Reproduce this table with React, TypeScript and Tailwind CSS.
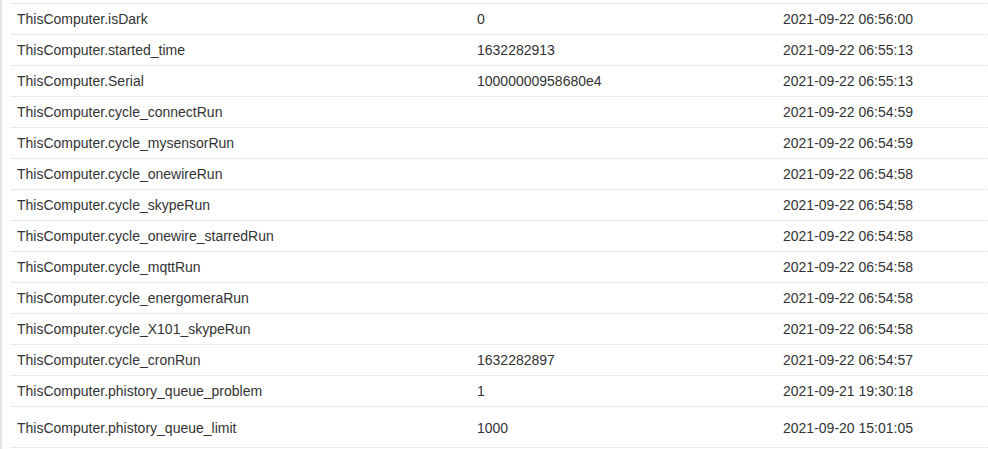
import React from 'react';

interface Row {
  name: string;
  value: string;
  updated: string;
}

const rows: Row[] = [
  { name: 'ThisComputer.isDark', value: '0', updated: '2021-09-22 06:56:00' },
  { name: 'ThisComputer.started_time', value: '1632282913', updated: '2021-09-22 06:55:13' },
  { name: 'ThisComputer.Serial', value: '10000000958680e4', updated: '2021-09-22 06:55:13' },
  { name: 'ThisComputer.cycle_connectRun', value: '', updated: '2021-09-22 06:54:59' },
  { name: 'ThisComputer.cycle_mysensorRun', value: '', updated: '2021-09-22 06:54:59' },
  { name: 'ThisComputer.cycle_onewireRun', value: '', updated: '2021-09-22 06:54:58' },
  { name: 'ThisComputer.cycle_skypeRun', value: '', updated: '2021-09-22 06:54:58' },
  { name: 'ThisComputer.cycle_onewire_starredRun', value: '', updated: '2021-09-22 06:54:58' },
  { name: 'ThisComputer.cycle_mqttRun', value: '', updated: '2021-09-22 06:54:58' },
  { name: 'ThisComputer.cycle_energomeraRun', value: '', updated: '2021-09-22 06:54:58' },
  { name: 'ThisComputer.cycle_X101_skypeRun', value: '', updated: '2021-09-22 06:54:58' },
  { name: 'ThisComputer.cycle_cronRun', value: '1632282897', updated: '2021-09-22 06:54:57' },
  { name: 'ThisComputer.phistory_queue_problem', value: '1', updated: '2021-09-21 19:30:18' },
  { name: 'ThisComputer.phistory_queue_limit', value: '1000', updated: '2021-09-20 15:01:05' },
];

export default function App() {
  return (
    <div
      className="flex min-h-[449px] bg-white text-[14px] leading-[20px] text-[#333]"
      style={{ fontFamily: '"Liberation Sans", Arial, sans-serif' }}
    >
      <div className="w-[2px] shrink-0 bg-[#e3e3e3]" />
      <div className="ml-[9px] flex-1 pt-[3px]">
        <div className="border-b border-dotted border-[#d6d6d6]">
          {rows.map((row, i) => {
            const last = i === rows.length - 1;
            return (
              <div
                key={row.name}
                className={`grid grid-cols-[460px_306px_1fr] border-t border-dotted border-[#d6d6d6] ${
                  last ? 'pt-[11px] pb-[9px]' : 'py-[5px]'
                }`}
              >
                <div className="pl-[6px] whitespace-nowrap">{row.name}</div>
                <div className="pl-[6px]">{row.value}</div>
                <div className="pl-[6px] whitespace-nowrap">{row.updated}</div>
              </div>
            );
          })}
        </div>
      </div>
    </div>
  );
}
